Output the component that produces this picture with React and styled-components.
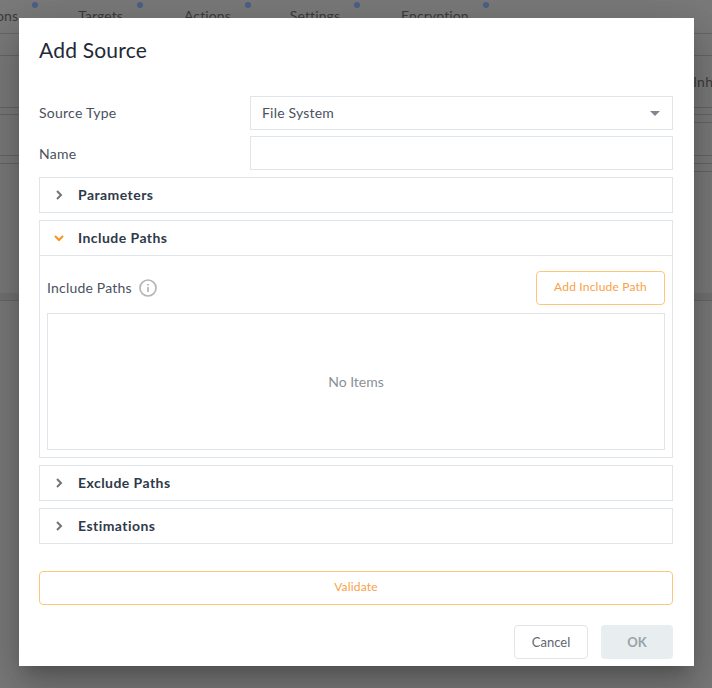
import React from 'react';
import styled, { createGlobalStyle } from 'styled-components';

const Global = createGlobalStyle`
  html, body {
    margin: 0;
    padding: 0;
  }
  body {
    font-family: "Lato", "Noto Sans", sans-serif;
    background: #7a7a7a;
    overflow: hidden;
  }
`;

const Page = styled.div`
  position: relative;
  width: 712px;
  height: 688px;
  overflow: hidden;
  background: #7a7a7a;
`;

const TabBar = styled.div`
  display: flex;
  height: 33px;
  border-bottom: 1px solid #666;
  color: #3c3c3c;
  font-size: 14px;
  letter-spacing: 0.1px;
`;

const Tab = styled.div`
  position: relative;
  padding-top: 7px;
  margin-left: ${p => p.$gap}px;
  line-height: 18px;

  &::after {
    content: '';
    position: absolute;
    top: 2px;
    right: -20px;
    width: 6px;
    height: 6px;
    border-radius: 50%;
    background: #4d6189;
  }
`;

const PageRule = styled.div`
  height: 1px;
  background: #666;
  margin-top: ${p => p.$top}px;
  margin-left: ${p => p.$left || 0}px;
`;

const Band = styled.div`
  height: 7px;
  margin-top: 121px;
  background: #727272;
  border-bottom: 1px solid #686868;
`;

const Inherit = styled.div`
  position: absolute;
  top: 73px;
  left: 693px;
  font-size: 14px;
  letter-spacing: 0.3px;
  color: #3c3c3c;
`;

const Modal = styled.div`
  position: absolute;
  top: 18px;
  left: 19px;
  width: 675px;
  height: 648px;
  box-sizing: border-box;
  padding: 0 21px 0 20px;
  background: #fff;
  box-shadow: 0 11px 15px -7px rgba(0, 0, 0, 0.2), 0 24px 38px 3px rgba(0, 0, 0, 0.14), 0 9px 46px 8px rgba(0, 0, 0, 0.12);
`;

const Title = styled.h2`
  margin: 0;
  padding-top: 19px;
  height: 78px;
  box-sizing: border-box;
  font-size: 21px;
  line-height: 26px;
  font-weight: 400;
  letter-spacing: 0.2px;
  color: #1f2a37;
`;

const FormRow = styled.div`
  display: flex;
  align-items: center;
  margin-bottom: 6px;
`;

const FieldLabel = styled.label`
  width: 211px;
  padding-bottom: ${p => (p.$lift ? 1 : 0)}px;
  font-size: 14px;
  letter-spacing: 0.25px;
  color: #4a5160;
`;

const Field = styled.div`
  display: flex;
  align-items: center;
  justify-content: space-between;
  flex: 1;
  height: 34px;
  box-sizing: border-box;
  padding: 0 12px 1px 11px;
  border: 1px solid #dfe5e8;
  font-size: 14px;
  letter-spacing: 0.2px;
  color: #4a5160;
`;

const Caret = styled.span`
  width: 0;
  height: 0;
  margin-top: 1px;
  border-left: 5px solid transparent;
  border-right: 5px solid transparent;
  border-top: 5px solid #7f8790;
`;

const Panel = styled.section`
  border: 1px solid #dfe5e8;
  margin-top: ${p => p.$top || 7}px;
`;

const PanelHeader = styled.div`
  display: flex;
  align-items: center;
  height: 34px;
  box-sizing: border-box;
  padding: 0 0 1px 14px;
  font-size: 14px;
  font-weight: 700;
  letter-spacing: 0.45px;
  color: #2f3a4a;
`;

const Chevron = styled.svg`
  width: 10px;
  height: 10px;
  margin-right: 14px;
  fill: none;
  stroke: ${p => (p.$open ? '#f7941d' : '#70757c')};
  stroke-width: 2;
`;

const PanelBody = styled.div`
  border-top: 1px solid #dfe5e8;
  padding: 15px 7px 7px;
`;

const PathsBar = styled.div`
  display: flex;
  align-items: center;
  justify-content: space-between;
  margin-bottom: 8px;
`;

const PathsLabel = styled.div`
  display: flex;
  align-items: center;
  gap: 7px;
  padding-bottom: 1px;
  font-size: 14px;
  letter-spacing: 0.2px;
  color: #4a5160;
`;

const InfoIcon = styled.svg`
  width: 18px;
  height: 18px;
  fill: none;
  stroke: #b5b5b5;
  stroke-width: 1.7;
`;

const OutlineButton = styled.button`
  height: 34px;
  width: ${p => p.$width || 'auto'};
  box-sizing: border-box;
  padding: 0 0 3px;
  background: #fff;
  border: 1px solid #fcc77c;
  border-radius: 4px;
  font: inherit;
  font-size: 12px;
  letter-spacing: 0.2px;
  color: #fb9f45;
`;

const EmptyList = styled.div`
  display: flex;
  align-items: center;
  justify-content: center;
  height: 137px;
  box-sizing: border-box;
  padding-bottom: 1px;
  border: 1px solid #dfe5e8;
  font-size: 14px;
  color: #8b9096;
`;

const ValidateRow = styled.div`
  margin-top: 27px;
`;

const Footer = styled.div`
  display: flex;
  justify-content: flex-end;
  gap: 13px;
  margin-top: 20px;
`;

const CancelButton = styled.button`
  width: 74px;
  height: 34px;
  padding: 0 0 1px;
  background: #fff;
  border: 1px solid #dfe5e8;
  border-radius: 4px;
  font: inherit;
  font-size: 13px;
  color: #5f6670;
`;

const OkButton = styled.button`
  width: 72px;
  height: 34px;
  padding: 0 0 1px;
  background: #e8edef;
  border: 0;
  border-radius: 4px;
  font: inherit;
  font-size: 13px;
  font-weight: 700;
  color: #9aa2a8;
`;

const ChevronIcon = ({ open }) => (
  <Chevron viewBox="0 0 10 10" $open={open}>
    <path d={open ? 'M1 3l4 4 4-4' : 'M3 1l4 4-4 4'} />
  </Chevron>
);

const tabs = [
  { label: 'ons', gap: -4 },
  { label: 'Targets', gap: 60 },
  { label: 'Actions', gap: 61 },
  { label: 'Settings', gap: 59 },
  { label: 'Encryption', gap: 61 }
];

export default function App() {
  return (
    <Page>
      <Global />
      <TabBar>
        {tabs.map(tab => (
          <Tab key={tab.label} $gap={tab.gap}>{tab.label}</Tab>
        ))}
      </TabBar>
      <PageRule $top={21} />
      <PageRule $top={51} />
      <PageRule $top={6} />
      <PageRule $top={7} $left={694} />
      <PageRule $top={32} />
      <PageRule $top={7} />
      <PageRule $top={7} $left={694} />
      <Band />
      <Inherit>Inh</Inherit>
      <Modal>
        <Title>Add Source</Title>
        <FormRow>
          <FieldLabel $lift>Source Type</FieldLabel>
          <Field>File System<Caret /></Field>
        </FormRow>
        <FormRow>
          <FieldLabel>Name</FieldLabel>
          <Field />
        </FormRow>
        <Panel $top={7}>
          <PanelHeader><ChevronIcon />Parameters</PanelHeader>
        </Panel>
        <Panel>
          <PanelHeader><ChevronIcon open />Include Paths</PanelHeader>
          <PanelBody>
            <PathsBar>
              <PathsLabel>
                Include Paths
                <InfoIcon viewBox="0 0 18 18">
                  <circle cx="9" cy="9" r="8" />
                  <path d="M9 8v5M9 5v1.5" />
                </InfoIcon>
              </PathsLabel>
              <OutlineButton $width="129px">Add Include Path</OutlineButton>
            </PathsBar>
            <EmptyList>No Items</EmptyList>
          </PanelBody>
        </Panel>
        <Panel>
          <PanelHeader><ChevronIcon />Exclude Paths</PanelHeader>
        </Panel>
        <Panel>
          <PanelHeader><ChevronIcon />Estimations</PanelHeader>
        </Panel>
        <ValidateRow>
          <OutlineButton $width="100%">Validate</OutlineButton>
        </ValidateRow>
        <Footer>
          <CancelButton>Cancel</CancelButton>
          <OkButton>OK</OkButton>
        </Footer>
      </Modal>
    </Page>
  );
}
